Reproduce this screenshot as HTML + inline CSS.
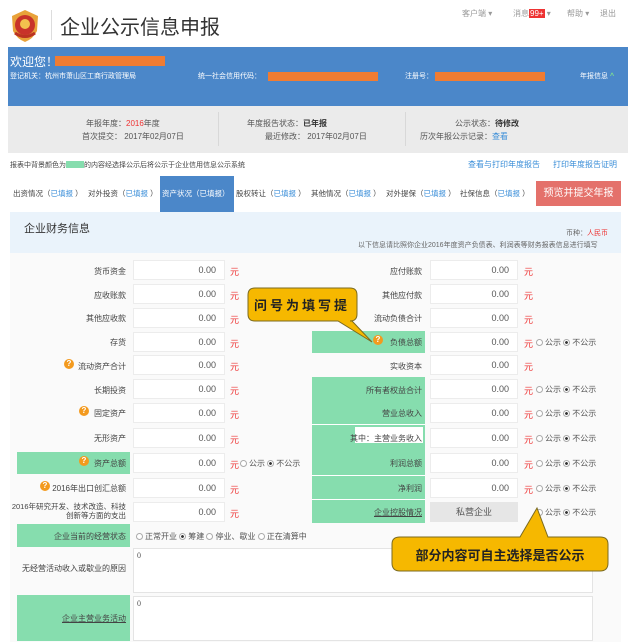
<!DOCTYPE html>
<html><head><meta charset="utf-8"><style>
*{margin:0;padding:0;box-sizing:border-box}
body{width:638px;height:642px;overflow:hidden;background:#fff;font-family:"Liberation Sans","Noto Sans CJK SC",sans-serif;font-size:8px;color:#555;position:relative}
.a{position:absolute;white-space:nowrap}
.inp{position:absolute;background:#fff;border:1px solid #ececec;height:20px;width:92px;text-align:right;padding-right:8px;line-height:18px;font-size:9px;color:#555}
.y{position:absolute;color:#e33;font-size:9px}
.lb{position:absolute;text-align:right;font-size:8px;color:#444}
.g{position:absolute;background:#86ddae}
.r{display:inline-block;width:7px;height:7px;border:1px solid #aaa;border-radius:50%;vertical-align:-1px;margin-right:2px;background:#fff}
.r.on{background:radial-gradient(#333 35%,#fff 45%)}
.q{display:inline-block;width:10px;height:10px;border-radius:50%;background:#f39a1e;color:#fff;font-size:8px;text-align:center;line-height:10px;font-weight:bold}
.rad{position:absolute;font-size:8px;color:#555}
.tab{position:absolute;top:188px;font-size:7.5px;color:#444;white-space:nowrap}
.tab span{color:#3a8ed8}
</style></head><body>
<svg class="a" style="left:9px;top:9px" width="32" height="34" viewBox="0 0 32 34"><path d="M16 1 L29 7 L28 22 Q24 30 16 33 Q8 30 4 22 L3 7Z" fill="#e8a23a"/><circle cx="16" cy="16" r="10" fill="#c8332a"/><circle cx="16" cy="15" r="5" fill="#f2c14e"/><path d="M6 24 Q16 31 26 24" stroke="#b32" stroke-width="3" fill="none"/></svg>
<div class="a" style="left:51px;top:10px;width:1px;height:30px;background:#ddd"></div>
<div class="a" style="left:60px;top:11px;font-size:20px;color:#333">企业公示信息申报</div>
<div class="a" style="left:462px;top:8px;font-size:8px;color:#999">客户端 ▾</div>
<div class="a" style="left:513px;top:8px;font-size:8px;color:#999">消息<span style="background:#e33;color:#fff;padding:0 1px">99+</span> ▾</div>
<div class="a" style="left:567px;top:8px;font-size:8px;color:#999">帮助 ▾</div>
<div class="a" style="left:600px;top:8px;font-size:8px;color:#999">退出</div>
<div class="a" style="left:8px;top:47px;width:620px;height:59px;background:#4b87c9"></div>
<div class="a" style="left:10px;top:53px;font-size:12px;color:#fff">欢迎您！</div>
<div class="a" style="left:55px;top:56px;width:110px;height:10px;background:#f07c32"></div>
<div class="a" style="left:10px;top:71px;font-size:7px;color:#fff">登记机关：杭州市萧山区工商行政管理局</div>
<div class="a" style="left:198px;top:71px;font-size:7px;color:#fff">统一社会信用代码：</div>
<div class="a" style="left:268px;top:72px;width:110px;height:9px;background:#f07c32"></div>
<div class="a" style="left:405px;top:71px;font-size:7px;color:#fff">注册号：</div>
<div class="a" style="left:435px;top:72px;width:110px;height:9px;background:#f07c32"></div>
<div class="a" style="left:580px;top:71px;font-size:7px;color:#fff">年报信息 <b style="color:#7fe08f">^</b></div>
<div class="a" style="left:8px;top:106px;width:620px;height:47px;background:#ebebeb"></div>
<div class="a" style="left:218px;top:112px;width:1px;height:34px;background:#d8d8d8"></div>
<div class="a" style="left:405px;top:112px;width:1px;height:34px;background:#d8d8d8"></div>
<div class="a" style="left:86px;top:118px;font-size:8px;color:#555">年报年度：<span style="color:#e33">2016</span>年度</div>
<div class="a" style="left:82px;top:131px;font-size:8px;color:#555">首次提交： 2017年02月07日</div>
<div class="a" style="left:247px;top:118px;font-size:8px;color:#555">年度报告状态：<b style="color:#333">已年报</b></div>
<div class="a" style="left:265px;top:131px;font-size:8px;color:#555">最近修改： 2017年02月07日</div>
<div class="a" style="left:455px;top:118px;font-size:8px;color:#555">公示状态：<b style="color:#333">待修改</b></div>
<div class="a" style="left:420px;top:131px;font-size:8px;color:#555">历次年报公示记录：<span style="color:#3a8ed8">查看</span></div>
<div class="a" style="left:10px;top:160px;font-size:7px;color:#444">报表中背景颜色为<span style="display:inline-block;width:18px;height:7px;background:#86ddae;vertical-align:-1px"></span>的内容经选择公示后将公示于企业信用信息公示系统</div>
<div class="a" style="left:468px;top:159px;font-size:8px;color:#3a8ed8">查看与打印年度报告</div>
<div class="a" style="left:553px;top:159px;font-size:8px;color:#3a8ed8">打印年度报告证明</div>
<div class="a" style="left:160px;top:176px;width:74px;height:36px;background:#4b87c9"></div>
<div class="tab" style="left:13px">出资情况（<span>已填报</span> ）</div>
<div class="tab" style="left:88px">对外投资（<span>已填报</span> ）</div>
<div class="tab" style="left:162px;color:#fff">资产状况（已填报）</div>
<div class="tab" style="left:236px">股权转让（<span>已填报</span> ）</div>
<div class="tab" style="left:311px">其他情况（<span>已填报</span> ）</div>
<div class="tab" style="left:386px">对外提保（<span>已填报</span> ）</div>
<div class="tab" style="left:460px">社保信息（<span>已填报</span> ）</div>
<div class="a" style="left:536px;top:181px;width:85px;height:25px;background:#e4716b;color:#fff;font-size:10px;text-align:center;line-height:25px">预览并提交年报</div>
<div class="a" style="left:10px;top:212px;width:611px;height:430px;background:#fafafa"></div>
<div class="a" style="left:10px;top:212px;width:611px;height:41px;background:#eaf3fb"></div>
<div class="a" style="left:24px;top:220px;font-size:11px;color:#333">企业财务信息</div>
<div class="a" style="left:566px;top:228px;font-size:7px;color:#666">币种：<span style="color:#e33">人民币</span></div>
<div class="a" style="left:358px;top:240px;font-size:7px;color:#666">以下信息请比照你企业2016年度资产负债表、利润表等财务报表信息进行填写</div>
<div class="g" style="left:17px;top:452px;width:113px;height:22px"></div>
<div class="g" style="left:17px;top:524px;width:113px;height:23px"></div>
<div class="g" style="left:17px;top:595px;width:113px;height:46px"></div>
<div class="g" style="left:312px;top:331px;width:113px;height:22px"></div>
<div class="g" style="left:312px;top:377px;width:113px;height:146px"></div>
<div class="a" style="left:312px;top:475px;width:113px;height:1px;background:#fff"></div>
<div class="a" style="left:312px;top:499px;width:113px;height:1px;background:#fff"></div>
<div class="a" style="left:312px;top:424px;width:113px;height:1px;background:#fff"></div>
<div class="a" style="left:355px;top:427px;width:68px;height:16px;background:#fff"></div>
<div class="lb" style="left:30px;width:96px;top:266px">货币资金</div>
<div class="lb" style="left:30px;width:96px;top:290px">应收账款</div>
<div class="lb" style="left:30px;width:96px;top:313px">其他应收款</div>
<div class="lb" style="left:30px;width:96px;top:337px">存货</div>
<div class="lb" style="left:30px;width:96px;top:361px">流动资产合计</div>
<div class="lb" style="left:30px;width:96px;top:385px">长期投资</div>
<div class="lb" style="left:30px;width:96px;top:408px">固定资产</div>
<div class="lb" style="left:30px;width:96px;top:433px">无形资产</div>
<div class="lb" style="left:30px;width:96px;top:458px">资产总额</div>
<div class="lb" style="left:30px;width:96px;top:483px">2016年出口创汇总额</div>
<div class="lb" style="left:10px;width:116px;top:502px;line-height:9px;font-size:7.5px;white-space:normal">2016年研究开发、技术改造、科技创新等方面的支出</div>
<div class="lb" style="left:20px;width:106px;top:531px">企业当前的经营状态</div>
<div class="lb" style="left:20px;width:106px;top:563px">无经营活动收入或歇业的原因</div>
<div class="lb" style="left:20px;width:106px;top:613px;text-decoration:underline">企业主营业务活动</div>
<div class="a" style="left:64px;top:359px"><span class="q">?</span></div>
<div class="a" style="left:79px;top:406px"><span class="q">?</span></div>
<div class="a" style="left:79px;top:456px"><span class="q">?</span></div>
<div class="a" style="left:40px;top:481px"><span class="q">?</span></div>
<div class="a" style="left:373px;top:335px"><span class="q">?</span></div>
<div class="inp" style="left:133px;top:260px">0.00</div><div class="y" style="left:230px;top:265px">元</div>
<div class="inp" style="left:133px;top:284px">0.00</div><div class="y" style="left:230px;top:289px">元</div>
<div class="inp" style="left:133px;top:308px">0.00</div><div class="y" style="left:230px;top:313px">元</div>
<div class="inp" style="left:133px;top:332px">0.00</div><div class="y" style="left:230px;top:337px">元</div>
<div class="inp" style="left:133px;top:355px">0.00</div><div class="y" style="left:230px;top:360px">元</div>
<div class="inp" style="left:133px;top:379px">0.00</div><div class="y" style="left:230px;top:384px">元</div>
<div class="inp" style="left:133px;top:403px">0.00</div><div class="y" style="left:230px;top:408px">元</div>
<div class="inp" style="left:133px;top:428px">0.00</div><div class="y" style="left:230px;top:433px">元</div>
<div class="inp" style="left:133px;top:453px">0.00</div><div class="y" style="left:230px;top:458px">元</div>
<div class="rad" style="left:240px;top:458px"><span class="r"></span>公示 <span class="r on"></span>不公示</div>
<div class="inp" style="left:133px;top:478px">0.00</div><div class="y" style="left:230px;top:483px">元</div>
<div class="inp" style="left:133px;top:502px">0.00</div><div class="y" style="left:230px;top:507px">元</div>
<div class="rad" style="left:136px;top:531px"><span class="r"></span>正常开业 <span class="r on"></span>筹建 <span class="r"></span>停业、歇业 <span class="r"></span>正在清算中</div>
<div class="a" style="left:133px;top:548px;width:460px;height:45px;background:#fff;border:1px solid #e4e4e4;font-size:8px;padding:2px 3px;font-family:'Liberation Serif',serif">0</div>
<div class="a" style="left:133px;top:596px;width:460px;height:45px;background:#fff;border:1px solid #e4e4e4;font-size:8px;padding:2px 3px;font-family:'Liberation Serif',serif">0</div>
<div class="lb" style="left:320px;width:102px;top:266px">应付账款</div>
<div class="lb" style="left:320px;width:102px;top:290px">其他应付款</div>
<div class="lb" style="left:320px;width:102px;top:313px">流动负债合计</div>
<div class="lb" style="left:320px;width:102px;top:337px">负债总额</div>
<div class="lb" style="left:320px;width:102px;top:361px">实收资本</div>
<div class="lb" style="left:320px;width:102px;top:385px">所有者权益合计</div>
<div class="lb" style="left:320px;width:102px;top:408px">营业总收入</div>
<div class="lb" style="left:320px;width:102px;top:433px">其中：主营业务收入</div>
<div class="lb" style="left:320px;width:102px;top:458px">利润总额</div>
<div class="lb" style="left:320px;width:102px;top:483px">净利润</div>
<div class="lb" style="left:320px;width:102px;top:507px;text-decoration:underline">企业控股情况</div>
<div class="inp" style="left:430px;top:260px;width:88px">0.00</div><div class="y" style="left:524px;top:265px">元</div>
<div class="inp" style="left:430px;top:284px;width:88px">0.00</div><div class="y" style="left:524px;top:289px">元</div>
<div class="inp" style="left:430px;top:308px;width:88px">0.00</div><div class="y" style="left:524px;top:313px">元</div>
<div class="inp" style="left:430px;top:332px;width:88px">0.00</div><div class="y" style="left:524px;top:337px">元</div>
<div class="inp" style="left:430px;top:355px;width:88px">0.00</div><div class="y" style="left:524px;top:360px">元</div>
<div class="inp" style="left:430px;top:379px;width:88px">0.00</div><div class="y" style="left:524px;top:384px">元</div>
<div class="inp" style="left:430px;top:403px;width:88px">0.00</div><div class="y" style="left:524px;top:408px">元</div>
<div class="inp" style="left:430px;top:428px;width:88px">0.00</div><div class="y" style="left:524px;top:433px">元</div>
<div class="inp" style="left:430px;top:453px;width:88px">0.00</div><div class="y" style="left:524px;top:458px">元</div>
<div class="inp" style="left:430px;top:478px;width:88px">0.00</div><div class="y" style="left:524px;top:483px">元</div>
<div class="inp" style="left:430px;top:502px;width:88px;background:#e6e6e6;border-color:#e6e6e6;text-align:center;padding:0;font-size:9px">私营企业</div>
<div class="rad" style="left:536px;top:337px"><span class="r"></span>公示 <span class="r on"></span>不公示</div>
<div class="rad" style="left:536px;top:384px"><span class="r"></span>公示 <span class="r on"></span>不公示</div>
<div class="rad" style="left:536px;top:408px"><span class="r"></span>公示 <span class="r on"></span>不公示</div>
<div class="rad" style="left:536px;top:433px"><span class="r"></span>公示 <span class="r on"></span>不公示</div>
<div class="rad" style="left:536px;top:458px"><span class="r"></span>公示 <span class="r on"></span>不公示</div>
<div class="rad" style="left:536px;top:483px"><span class="r"></span>公示 <span class="r on"></span>不公示</div>
<div class="rad" style="left:536px;top:507px"><span class="r"></span>公示 <span class="r on"></span>不公示</div>
<svg class="a" style="left:0;top:0" width="638" height="642">
<path d="M255 288 H350 Q357 288 357 295 V314 Q357 321 350 321 H352 L372 342 L338 321 H255 Q248 321 248 314 V295 Q248 288 255 288Z" fill="#f6b800" stroke="#7a6a20" stroke-width="1"/>
<path d="M400 537 H520 L537 508 L548 537 H600 Q608 537 608 544 V563 Q608 571 600 571 H400 Q392 571 392 563 V544 Q392 537 400 537Z" fill="#f6b800" stroke="#7a6a20" stroke-width="1"/>
<text x="302" y="310" font-size="13" font-weight="bold" fill="#222" text-anchor="middle" letter-spacing="3" font-family="Liberation Sans,Noto Sans CJK SC,sans-serif">问号为填写提</text>
<text x="500" y="560" font-size="13" font-weight="bold" fill="#222" text-anchor="middle" font-family="Liberation Sans,Noto Sans CJK SC,sans-serif">部分内容可自主选择是否公示</text>
</svg>
</body></html>
